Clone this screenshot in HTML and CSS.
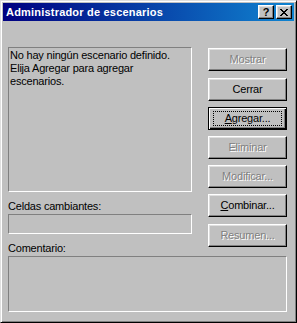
FILE: index.html
```html
<!DOCTYPE html>
<html lang="es">
<head>
<meta charset="utf-8">
<title>Administrador de escenarios</title>
<link rel="stylesheet" href="styles.css">
</head>
<body>
<div class="window">
  <div class="titlebar">
    <span class="title">Administrador de escenarios</span>
    <div class="tbtns">
      <span class="tbtn help">?</span>
      <span class="tbtn close"><svg width="8" height="7" viewBox="0 0 8 7"><path d="M0 0h2v1h1v1h2v-1h1v-1h2v1h-1v1h-1v1h-1v1h1v1h1v1h1v1h-2v-1h-1v-1h-2v1h-1v1h-2v-1h1v-1h1v-1h1v-1h-1v-1h-1v-1h-1z" fill="#000"/></svg></span>
    </div>
  </div>
  <div class="body">
    <div class="listbox">No hay ningún escenario definido. Elija Agregar para agregar escenarios.</div>
    <div class="label l1">Celdas cambiantes:</div>
    <div class="field"></div>
    <div class="label l2">Comentario:</div>
    <div class="comment"></div>
    <div class="buttons">
      <span class="btn disabled">Mostrar</span>
      <span class="btn">Cerrar</span>
      <span class="btn default"><span class="focus"><u>A</u>gregar...</span></span>
      <span class="btn disabled">Eliminar</span>
      <span class="btn disabled">Modificar...</span>
      <span class="btn"><span><u>C</u>ombinar...</span></span>
      <span class="btn disabled">Resumen...</span>
    </div>
  </div>
</div>
</body>
</html>
```

FILE: styles.css
```css
html, body {
  margin: 0;
  padding: 0;
  background: #c0c0c0;
}
body {
  font-family: "Liberation Sans", Arial, sans-serif;
  font-size: 11px;
  line-height: 13px;
  letter-spacing: -0.2px;
  color: #000;
}
.window {
  width: 297px;
  height: 323px;
  box-sizing: border-box;
  background: #c0c0c0;
  border: 1px solid;
  border-color: #dfdfdf #000 #000 #dfdfdf;
  box-shadow: inset 1px 1px 0 #fff, inset -1px -1px 0 #808080;
  padding: 2px;
}
.titlebar {
  height: 18px;
  background: linear-gradient(to right, #000080, #1084d0);
  display: flex;
  align-items: center;
  justify-content: space-between;
  padding: 0 2px 0 3px;
}
.title {
  color: #fff;
  font-weight: bold;
  font-size: 11px;
  letter-spacing: 0.2px;
}
.tbtns {
  display: flex;
  gap: 2px;
}
.tbtn {
  width: 16px;
  height: 14px;
  box-sizing: border-box;
  background: #c0c0c0;
  border: 1px solid;
  border-color: #fff #000 #000 #fff;
  box-shadow: inset -1px -1px 0 #808080, inset 1px 1px 0 #dfdfdf;
  display: flex;
  align-items: center;
  justify-content: center;
}
.help {
  font-weight: bold;
  font-size: 11px;
  line-height: 12px;
  letter-spacing: 0;
}
.body {
  display: grid;
  grid-template-columns: 184px 79px;
  column-gap: 16px;
  grid-template-areas:
    "list btns"
    "l1 btns"
    "in btns"
    "l2 btns"
    "com com";
  align-items: start;
  padding: 26px 0 0 5px;
}
.listbox {
  grid-area: list;
  height: 145px;
  box-sizing: border-box;
  border: 1px solid;
  border-color: #808080 #fff #fff #808080;
  padding: 1px 1px 0 1px;
}
.label { white-space: nowrap; }
.l1 { grid-area: l1; margin-top: 8px; }
.l2 { grid-area: l2; margin-top: 8px; }
.field {
  grid-area: in;
  height: 20px;
  margin-top: 1px;
  box-sizing: border-box;
  border: 1px solid;
  border-color: #808080 #fff #fff #808080;
}
.comment {
  grid-area: com;
  height: 56px;
  margin-top: 1px;
  box-sizing: border-box;
  border: 1px solid;
  border-color: #808080 #fff #fff #808080;
}
.buttons {
  grid-area: btns;
  display: flex;
  flex-direction: column;
  gap: 6px;
  margin-top: 1px;
}
.btn {
  height: 23px;
  box-sizing: border-box;
  border: 1px solid;
  border-color: #fff #000 #000 #fff;
  box-shadow: inset -1px -1px 0 #808080, inset 1px 1px 0 #dfdfdf;
  display: flex;
  align-items: center;
  justify-content: center;
}
.btn:nth-child(2), .btn:last-child { margin-top: 1px; }
.btn.disabled {
  color: #808080;
  text-shadow: 1px 1px 0 #fff;
}
.btn.default {
  border: 1px solid #000;
  box-shadow: inset 1px 1px 0 #fff, inset -1px -1px 0 #000, inset -2px -2px 0 #808080;
  padding: 3px 4px;
}
.focus {
  flex: 1;
  align-self: stretch;
  display: flex;
  align-items: center;
  justify-content: center;
  outline: 1px dotted #000;
  outline-offset: -1px;
}
u { text-decoration: underline; text-underline-offset: 1px; }
```
